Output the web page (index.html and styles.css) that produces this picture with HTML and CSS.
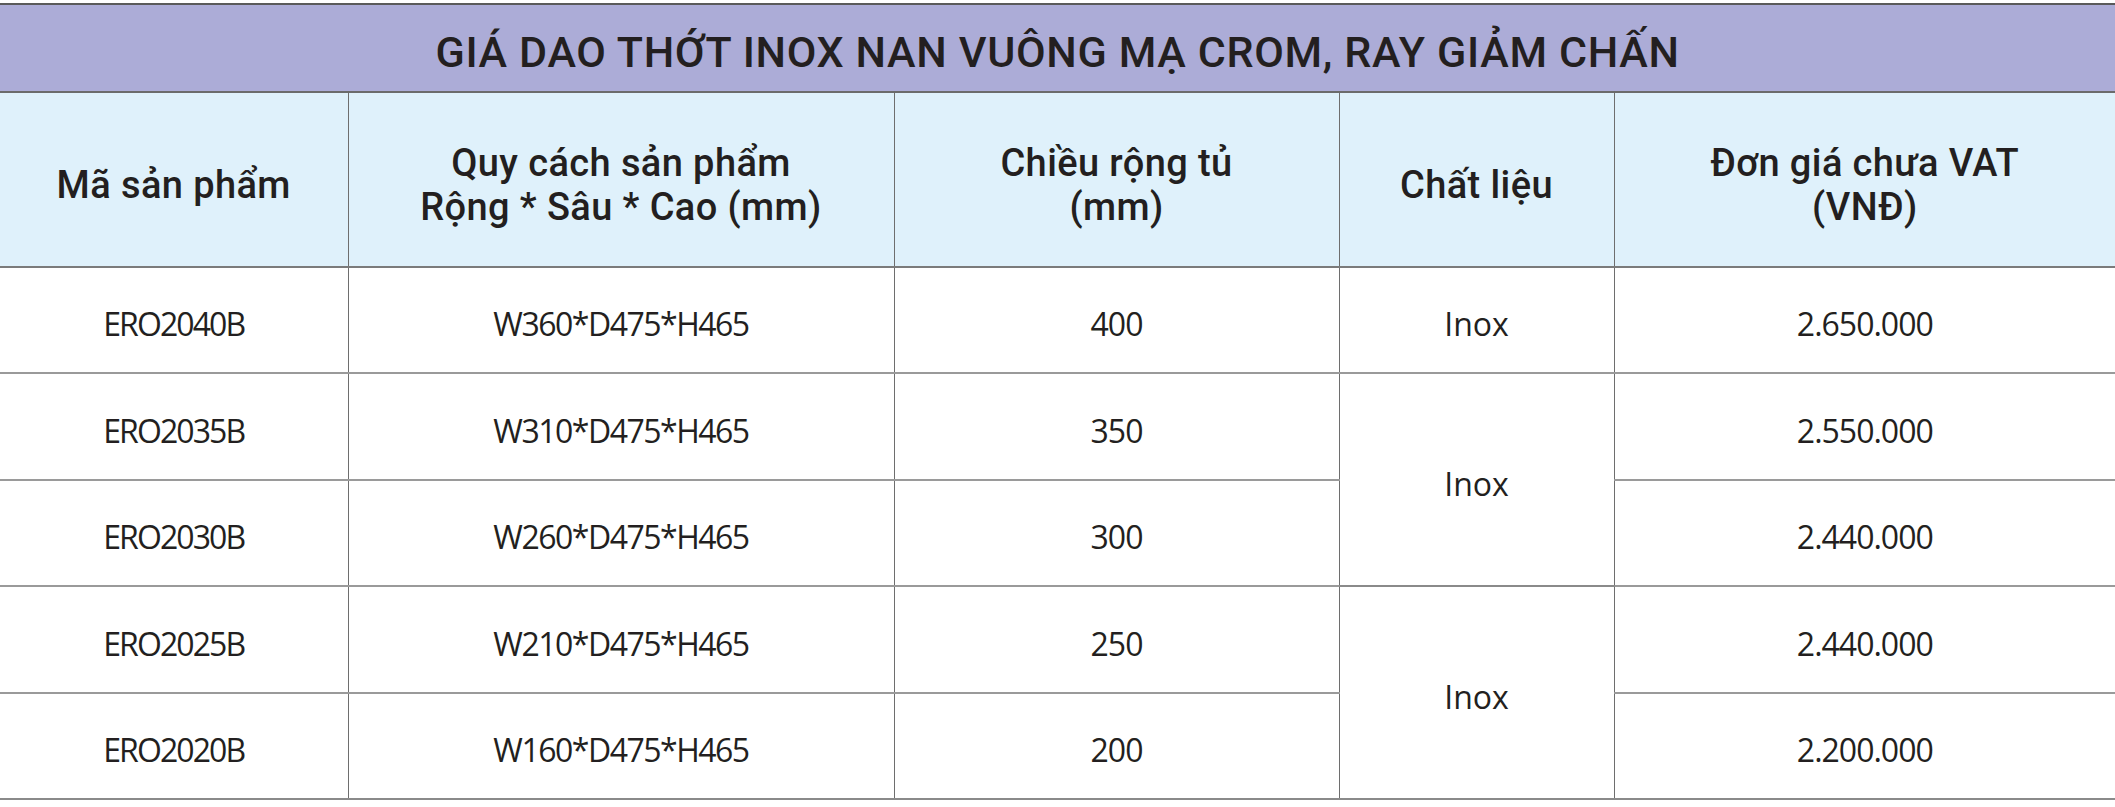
FILE: index.html
```html
<!DOCTYPE html>
<html lang="vi">
<head>
<meta charset="utf-8">
<title>Giá dao thớt inox nan vuông mạ crom</title>
<link rel="stylesheet" href="styles.css">
</head>
<body>
<div class="sheet">
  <table class="price-table">
    <colgroup>
      <col class="c-code">
      <col class="c-spec">
      <col class="c-width">
      <col class="c-mat">
      <col class="c-price">
    </colgroup>
    <thead>
      <tr class="title-row">
        <th colspan="5">GIÁ DAO THỚT INOX NAN VUÔNG MẠ CROM, RAY GIẢM CHẤN</th>
      </tr>
      <tr class="head-row">
        <th>Mã sản phẩm</th>
        <th>Quy cách sản phẩm<br>Rộng * Sâu * Cao (mm)</th>
        <th>Chiều rộng tủ<br>(mm)</th>
        <th>Chất liệu</th>
        <th>Đơn giá chưa VAT<br>(VNĐ)</th>
      </tr>
    </thead>
    <tbody>
      <tr class="r-a">
        <td class="code">ERO2040B</td>
        <td class="spec">W360*D475*H465</td>
        <td class="num">400</td>
        <td class="mat">Inox</td>
        <td class="num">2.650.000</td>
      </tr>
      <tr class="r-b">
        <td class="code">ERO2035B</td>
        <td class="spec">W310*D475*H465</td>
        <td class="num">350</td>
        <td class="mat" rowspan="2">Inox</td>
        <td class="num">2.550.000</td>
      </tr>
      <tr class="r-a">
        <td class="code">ERO2030B</td>
        <td class="spec">W260*D475*H465</td>
        <td class="num">300</td>
        <td class="num">2.440.000</td>
      </tr>
      <tr class="r-b">
        <td class="code">ERO2025B</td>
        <td class="spec">W210*D475*H465</td>
        <td class="num">250</td>
        <td class="mat" rowspan="2">Inox</td>
        <td class="num">2.440.000</td>
      </tr>
      <tr class="r-a">
        <td class="code">ERO2020B</td>
        <td class="spec">W160*D475*H465</td>
        <td class="num">200</td>
        <td class="num">2.200.000</td>
      </tr>
    </tbody>
  </table>
</div>
</body>
</html>
```

FILE: styles.css
```css
html, body {
  margin: 0;
  padding: 0;
  background: #ffffff;
}

.sheet {
  padding-top: 3px;
}

.price-table {
  width: 2115px;
  border-collapse: collapse;
  table-layout: fixed;
  color: #231f20;
}

.c-code { width: 348px; }
.c-spec { width: 546px; }
.c-width { width: 445px; }
.c-mat { width: 275px; }
.c-price { width: 501px; }

.title-row {
  height: 88px;
}

.title-row th {
  padding: 9px 0 0 0;
  background: #acacd7;
  border-top: 2px solid #5a5a5a;
  border-bottom: 2px solid #6b6b6b;
  font-family: Roboto, "Liberation Sans", Arial, sans-serif;
  font-weight: 500;
  font-size: 43px;
  letter-spacing: 0.65px;
  text-align: center;
  vertical-align: middle;
  line-height: 1;
}

.head-row {
  height: 175px;
}

.head-row th {
  padding: 10px 0 0 0;
  background: #dff1fb;
  border-bottom: 2px solid #7b7b7b;
  border-left: 1px solid #6e6e6e;
  font-family: Roboto, "Liberation Sans", Arial, sans-serif;
  font-weight: 500;
  font-size: 38px;
  letter-spacing: 0.4px;
  line-height: 44px;
  text-align: center;
  vertical-align: middle;
}

.head-row th:first-child {
  border-left: none;
}

.r-a { height: 106px; }
.r-b { height: 107px; }

tbody td {
  padding: 8px 0 0 0;
  border-bottom: 2px solid #9a9a9a;
  border-left: 1px solid #6e6e6e;
  font-family: "Open Sans", "Noto Sans", sans-serif;
  font-size: 32px;
  line-height: 40px;
  text-align: center;
  vertical-align: middle;
}

tbody tr:last-child td,
tbody td.mat[rowspan] {
  border-bottom-color: #8a8a8a;
}

tbody td.code {
  border-left: none;
  letter-spacing: -1.9px;
}

tbody td.num {
  letter-spacing: -1px;
}

tbody td.spec {
  letter-spacing: -1.5px;
}
```
